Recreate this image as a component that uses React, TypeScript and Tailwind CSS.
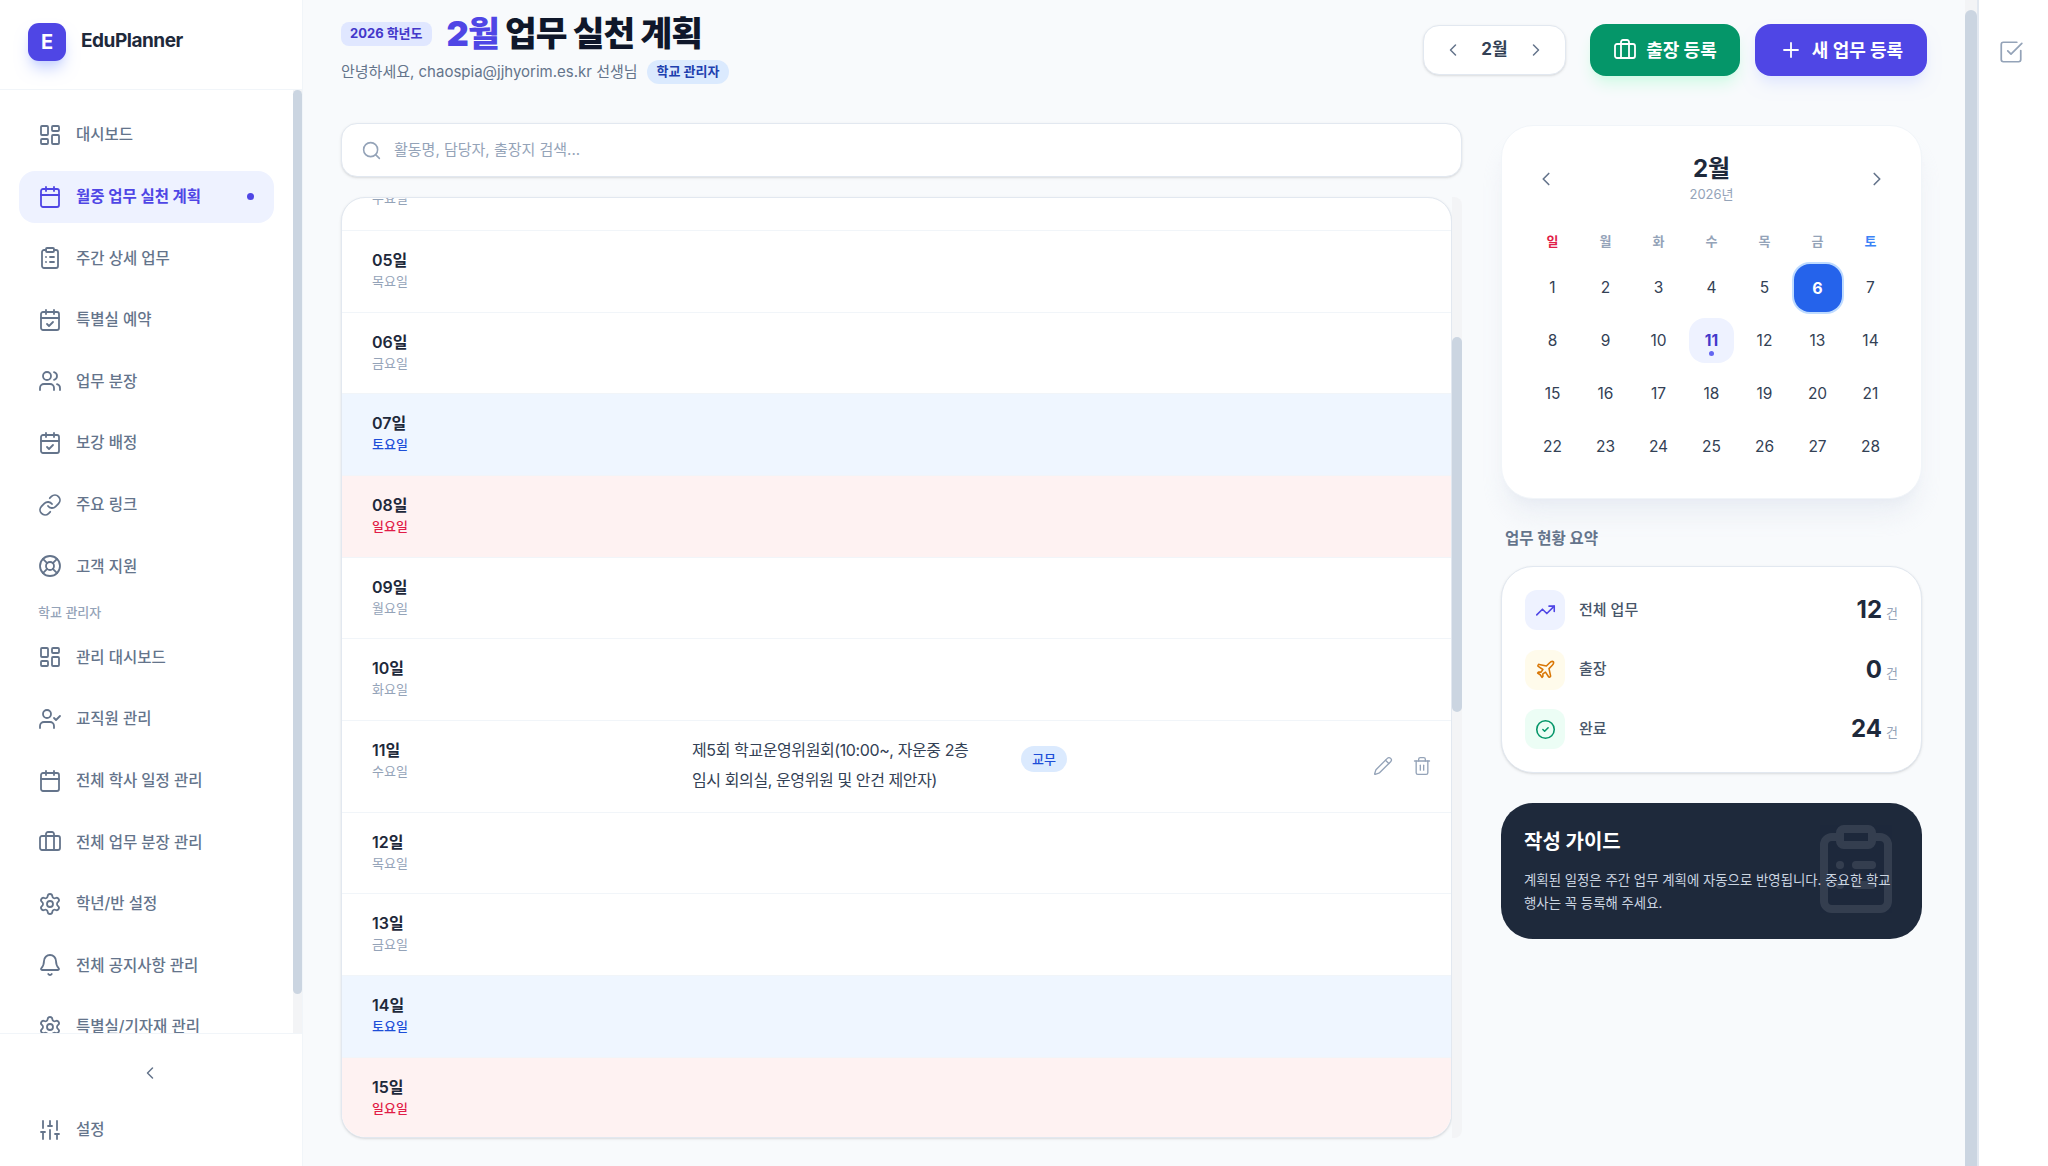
import {
  Bell,
  Briefcase,
  Calendar,
  CalendarCheck,
  ChevronLeft,
  ChevronRight,
  CircleCheck,
  ClipboardList,
  LayoutDashboard,
  LifeBuoy,
  Link,
  Pencil,
  Plane,
  Plus,
  Search,
  Settings,
  SlidersVertical,
  SquareCheckBig,
  Trash2,
  TrendingUp,
  UserCheck,
  Users,
} from 'lucide-react';

const topNav = [
  { label: '대시보드', icon: LayoutDashboard },
  { label: '월중 업무 실천 계획', icon: Calendar, active: true },
  { label: '주간 상세 업무', icon: ClipboardList },
  { label: '특별실 예약', icon: CalendarCheck },
  { label: '업무 분장', icon: Users },
  { label: '보강 배정', icon: CalendarCheck },
  { label: '주요 링크', icon: Link },
  { label: '고객 지원', icon: LifeBuoy },
];

const adminNav = [
  { label: '관리 대시보드', icon: LayoutDashboard },
  { label: '교직원 관리', icon: UserCheck },
  { label: '전체 학사 일정 관리', icon: Calendar },
  { label: '전체 업무 분장 관리', icon: Briefcase },
  { label: '학년/반 설정', icon: Settings },
  { label: '전체 공지사항 관리', icon: Bell },
  { label: '특별실/기자재 관리', icon: Settings },
];

const rows = [
  { day: '05일', week: '목요일' },
  { day: '06일', week: '금요일' },
  { day: '07일', week: '토요일', kind: 'sat' },
  { day: '08일', week: '일요일', kind: 'sun' },
  { day: '09일', week: '월요일' },
  { day: '10일', week: '화요일' },
  { day: '11일', week: '수요일', event: true },
  { day: '12일', week: '목요일' },
  { day: '13일', week: '금요일' },
  { day: '14일', week: '토요일', kind: 'sat' },
  { day: '15일', week: '일요일', kind: 'sun' },
];

const weekdays = ['일', '월', '화', '수', '목', '금', '토'];
const days = Array.from({ length: 28 }, (_, i) => i + 1);

function NavItem({ item }: { item: { label: string; icon: typeof Bell; active?: boolean } }) {
  const Icon = item.icon;
  return (
    <div
      className={
        item.active
          ? 'flex h-[52px] shrink-0 items-center gap-[14px] rounded-2xl bg-[#eef2ff] pl-[19px] pr-5 text-[15.5px] font-bold text-[#4f46e5]'
          : 'flex h-[52px] shrink-0 items-center gap-[14px] rounded-2xl pl-[19px] pr-5 text-[15.5px] font-medium text-[#64748b]'
      }
    >
      <Icon size={24} strokeWidth={1.8} className="shrink-0" />
      <span className="flex-1 whitespace-nowrap">{item.label}</span>
      {item.active && <span className="h-[7px] w-[7px] rounded-full bg-[#4f46e5]" />}
    </div>
  );
}

function Sidebar() {
  return (
    <aside className="flex h-full w-[303px] shrink-0 flex-col border-r border-slate-100 bg-white">
      <div className="flex h-[90px] shrink-0 items-center gap-[15px] border-b border-slate-100 pb-[6px] pl-[28px]">
        <div className="flex h-[38px] w-[38px] items-center justify-center rounded-[11px] bg-[#4f46e5] text-[20px] font-bold text-white shadow-lg shadow-indigo-200">
          E
        </div>
        <span className="text-[19px] font-bold tracking-tight text-[#1e293b]">EduPlanner</span>
      </div>

      <div className="flex min-h-0 flex-1">
        <nav className="flex min-w-0 flex-1 flex-col gap-[9.6px] overflow-hidden pl-[19px] pr-[19px] pt-[19px]">
          {topNav.map((item) => (
            <NavItem key={item.label} item={item} />
          ))}
          <div className="h-[20px] shrink-0 pl-[19px] text-[13px] font-medium leading-[20px] text-[#94a3b8]">
            학교 관리자
          </div>
          {adminNav.map((item) => (
            <NavItem key={item.label} item={item} />
          ))}
        </nav>
        <div className="w-[9px] shrink-0 bg-gray-100">
          <div className="h-[904px] rounded-full bg-[#cbd5e1]" />
        </div>
      </div>

      <div className="flex h-[133px] shrink-0 flex-col border-t border-slate-100 px-[19px] pt-[29px]">
        <div className="flex justify-center pr-[3px] text-[#64748b]">
          <ChevronLeft size={20} strokeWidth={1.8} />
        </div>
        <div className="mt-[35px] flex items-center gap-[14px] pl-[19px] text-[15.5px] font-medium text-[#64748b]">
          <SlidersVertical size={24} strokeWidth={1.8} />
          <span>설정</span>
        </div>
      </div>
    </aside>
  );
}

function Header() {
  return (
    <header className="flex h-[123px] shrink-0 items-start justify-between">
      <div>
        <div className="flex items-center gap-[15px] pt-[11px]">
          <span className="rounded-lg bg-[#e0e7ff] px-[9px] py-[2px] text-[13px] font-bold text-[#4338ca]">
            2026 학년도
          </span>
          <h1 className="text-[34.5px] font-black leading-[46px] tracking-tight text-[#0f172a]">
            <span className="text-[#4f46e5]">2월</span> 업무 실천 계획
          </h1>
        </div>
        <div className="mt-[3px] flex items-center gap-[9px] text-[15px] text-[#64748b]">
          <span>안녕하세요, chaospia@jjhyorim.es.kr 선생님</span>
          <span className="rounded-full bg-[#dbeafe] px-[10px] py-[2px] text-[13px] font-bold text-[#1e40af]">
            학교 관리자
          </span>
        </div>
      </div>
      <div className="flex items-center pt-[24px]">
        <div className="flex h-[50px] w-[143px] items-center justify-between rounded-2xl border border-slate-200 bg-white px-[19px] text-[#64748b] shadow-sm">
          <ChevronLeft size={20} strokeWidth={1.8} />
          <span className="text-[17px] font-bold text-[#334155]">2월</span>
          <ChevronRight size={20} strokeWidth={1.8} />
        </div>
        <button className="ml-[24px] flex h-[52px] w-[150px] items-center justify-center gap-[9px] rounded-2xl bg-[#059669] text-[18px] font-bold text-white shadow-lg shadow-emerald-100">
          <Briefcase size={24} strokeWidth={1.8} />
          출장 등록
        </button>
        <button className="ml-[15px] flex h-[52px] w-[172px] items-center justify-center gap-[9px] rounded-2xl bg-[#4f46e5] text-[18px] font-bold text-white shadow-lg shadow-indigo-100">
          <Plus size={24} strokeWidth={1.8} />
          새 업무 등록
        </button>
      </div>
    </header>
  );
}

function PlanRow({ row }: { row: (typeof rows)[number] }) {
  const bg = row.kind === 'sat' ? 'bg-[#eff6ff]' : row.kind === 'sun' ? 'bg-[#fef2f2]' : 'bg-white';
  const weekColor =
    row.kind === 'sat' ? 'text-[#1d4ed8] font-medium' : row.kind === 'sun' ? 'text-[#e11d48] font-medium' : 'text-[#94a3b8]';
  return (
    <div className={`flex shrink-0 border-b border-slate-100 pl-[30px] ${bg} ${row.event ? 'h-[91.5px]' : 'h-[81.7px]'}`}>
      <div className="w-[320px] shrink-0 pt-[17px]">
        <div className="text-[16px] font-semibold leading-[24px] text-[#1e293b]">{row.day}</div>
        <div className={`text-[13px] leading-[18px] ${weekColor}`}>{row.week}</div>
      </div>
      {row.event && (
        <div className="flex flex-1 items-start pr-[19px]">
          <p className="w-[300px] break-keep pt-[14px] text-[16px] leading-[30px] tracking-tight text-[#334155]">
            제5회 학교운영위원회(10:00~, 자운중 2층 임시 회의실, 운영위원 및 안건 제안자)
          </p>
          <span className="ml-[29px] mt-[25px] rounded-full bg-[#dbeafe] px-[11px] py-[3px] text-[13px] font-medium leading-[20px] text-[#1d4ed8]">
            교무
          </span>
          <div className="ml-auto flex items-center gap-[19px] pt-[35px] text-[#94a3b8]">
            <Pencil size={20} strokeWidth={1.6} />
            <Trash2 size={20} strokeWidth={1.6} />
          </div>
        </div>
      )}
    </div>
  );
}

function PlanList() {
  return (
    <div className="flex min-h-0 flex-1 flex-col">
      <div className="flex h-[54px] shrink-0 items-center gap-[12px] rounded-2xl border border-slate-200 bg-white pl-[19px] shadow-sm">
        <Search size={21} strokeWidth={1.8} className="text-[#94a3b8]" />
        <span className="text-[15px] text-[#94a3b8]">활동명, 담당자, 출장지 검색...</span>
      </div>
      <div className="mt-[20px] flex h-[941px] shrink-0">
        <div className="flex min-w-0 flex-1 flex-col overflow-hidden rounded-[24px] border border-slate-200 bg-white shadow-sm">
          <div className="h-[33px] shrink-0 overflow-hidden border-b border-slate-100 pl-[30px]">
            <div className="-mt-[9px] text-[13px] leading-[18px] text-[#94a3b8]">수요일</div>
          </div>
          {rows.map((row) => (
            <PlanRow key={row.day} row={row} />
          ))}
        </div>
        <div className="w-[10px] shrink-0 rounded-r-lg bg-gray-100 pt-[140px]">
          <div className="h-[375px] rounded-full bg-[#cbd5e1]" />
        </div>
      </div>
    </div>
  );
}

function MiniCalendar() {
  return (
    <section className="h-[374px] rounded-[32px] border border-slate-100 bg-white px-[24px] pt-[27px] shadow-xl shadow-slate-200/60">
      <div className="flex items-center justify-between px-[9px] text-[#64748b]">
        <ChevronLeft size={22} strokeWidth={1.8} />
        <div className="text-center">
          <div className="text-[24px] font-bold leading-[32px] text-[#1e293b]">2월</div>
          <div className="text-[13px] leading-[19px] text-[#94a3b8]">2026년</div>
        </div>
        <ChevronRight size={22} strokeWidth={1.8} />
      </div>
      <div className="mt-[24px] grid grid-cols-7">
        {weekdays.map((d, i) => (
          <div
            key={d}
            className={
              i === 0
                ? 'h-[26px] text-center text-[13px] font-bold leading-[26px] text-[#e11d48]'
                : i === 6
                  ? 'h-[26px] text-center text-[13px] font-bold leading-[26px] text-[#3b82f6]'
                  : 'h-[26px] text-center text-[13px] font-bold leading-[26px] text-[#94a3b8]'
            }
          >
            {d}
          </div>
        ))}
      </div>
      <div className="mt-[11px] grid grid-cols-7 gap-y-[8px]">
        {days.map((d) => (
          <div key={d} className="flex h-[45px] items-center justify-center">
            {d === 6 ? (
              <div className="flex h-[48px] w-[48px] items-center justify-center rounded-2xl bg-[#2563eb] text-[16px] font-bold text-white ring-2 ring-blue-200">
                6
              </div>
            ) : d === 11 ? (
              <div className="flex h-[45px] w-[45px] flex-col items-center justify-center rounded-2xl bg-[#eef2ff] pt-[5px] text-[15.5px] font-bold text-[#4338ca]">
                <span className="leading-[20px]">11</span>
                <span className="h-[5px] w-[5px] rounded-full bg-[#6366f1]" />
              </div>
            ) : (
              <span className="text-[15.5px] text-[#334155]">{d}</span>
            )}
          </div>
        ))}
      </div>
    </section>
  );
}

function StatRow({
  icon: Icon,
  iconClass,
  label,
  value,
}: {
  icon: typeof Bell;
  iconClass: string;
  label: string;
  value: number;
}) {
  return (
    <div className="flex h-[40px] items-center">
      <div className={`flex h-[40px] w-[40px] items-center justify-center rounded-xl ${iconClass}`}>
        <Icon size={21} strokeWidth={1.8} />
      </div>
      <span className="ml-[14px] flex-1 text-[15px] font-medium text-[#475569]">{label}</span>
      <span className="text-[24px] font-bold leading-none text-[#1e293b]">{value}</span>
      <span className="ml-[4px] self-end pb-[10px] text-[13px] leading-none text-[#94a3b8]">건</span>
    </div>
  );
}

function Summary() {
  return (
    <section className="mt-[30px]">
      <h2 className="pl-[4px] text-[15.5px] font-bold leading-[20px] text-[#64748b]">업무 현황 요약</h2>
      <div className="mt-[17px] flex h-[207px] flex-col gap-[19.5px] rounded-[32px] border border-slate-200 bg-white p-[23px] shadow-sm">
        <StatRow icon={TrendingUp} iconClass="bg-[#eef2ff] text-[#4f46e5]" label="전체 업무" value={12} />
        <StatRow icon={Plane} iconClass="bg-[#fffbeb] text-[#d97706]" label="출장" value={0} />
        <StatRow icon={CircleCheck} iconClass="bg-[#ecfdf5] text-[#059669]" label="완료" value={24} />
      </div>
    </section>
  );
}

function Guide() {
  return (
    <section className="relative mt-[30px] h-[136px] overflow-hidden rounded-[32px] bg-[#1e293b] px-[23px] pt-[25px] text-white">
      <ClipboardList size={96} strokeWidth={2} className="absolute right-[18px] top-[18px] text-white opacity-10" />
      <h3 className="relative text-[20px] font-bold leading-[28px]">작성 가이드</h3>
      <p className="relative mt-[13px] break-keep text-[13.4px] leading-[23px] text-[#cbd5e1]">
        계획된 일정은 주간 업무 계획에 자동으로 반영됩니다. 중요한 학교 행사는 꼭 등록해 주세요.
      </p>
    </section>
  );
}

export default function App() {
  return (
    <div className="flex h-screen w-screen overflow-hidden bg-[#f8fafc] font-['Inter','Noto_Sans_CJK_KR',sans-serif]">
      <Sidebar />
      <main className="flex min-w-0 flex-1 flex-col overflow-hidden pl-[38px] pr-[38px]">
        <Header />
        <div className="flex min-h-0 flex-1 gap-[39px] pr-[5px]">
          <PlanList />
          <div className="w-[421px] shrink-0 pt-[2px]">
            <MiniCalendar />
            <Summary />
            <Guide />
          </div>
        </div>
      </main>
      <div className="w-[12px] shrink-0 bg-gray-100 pt-[10px]">
        <div className="h-full rounded-t-full bg-[#cbd5e1]" />
      </div>
      <div className="flex w-[71px] shrink-0 justify-center border-l-2 border-slate-200 bg-white pt-[39px] pr-[5px]">
        <SquareCheckBig size={26} strokeWidth={1.6} className="text-[#94a3b8]" />
      </div>
    </div>
  );
}
